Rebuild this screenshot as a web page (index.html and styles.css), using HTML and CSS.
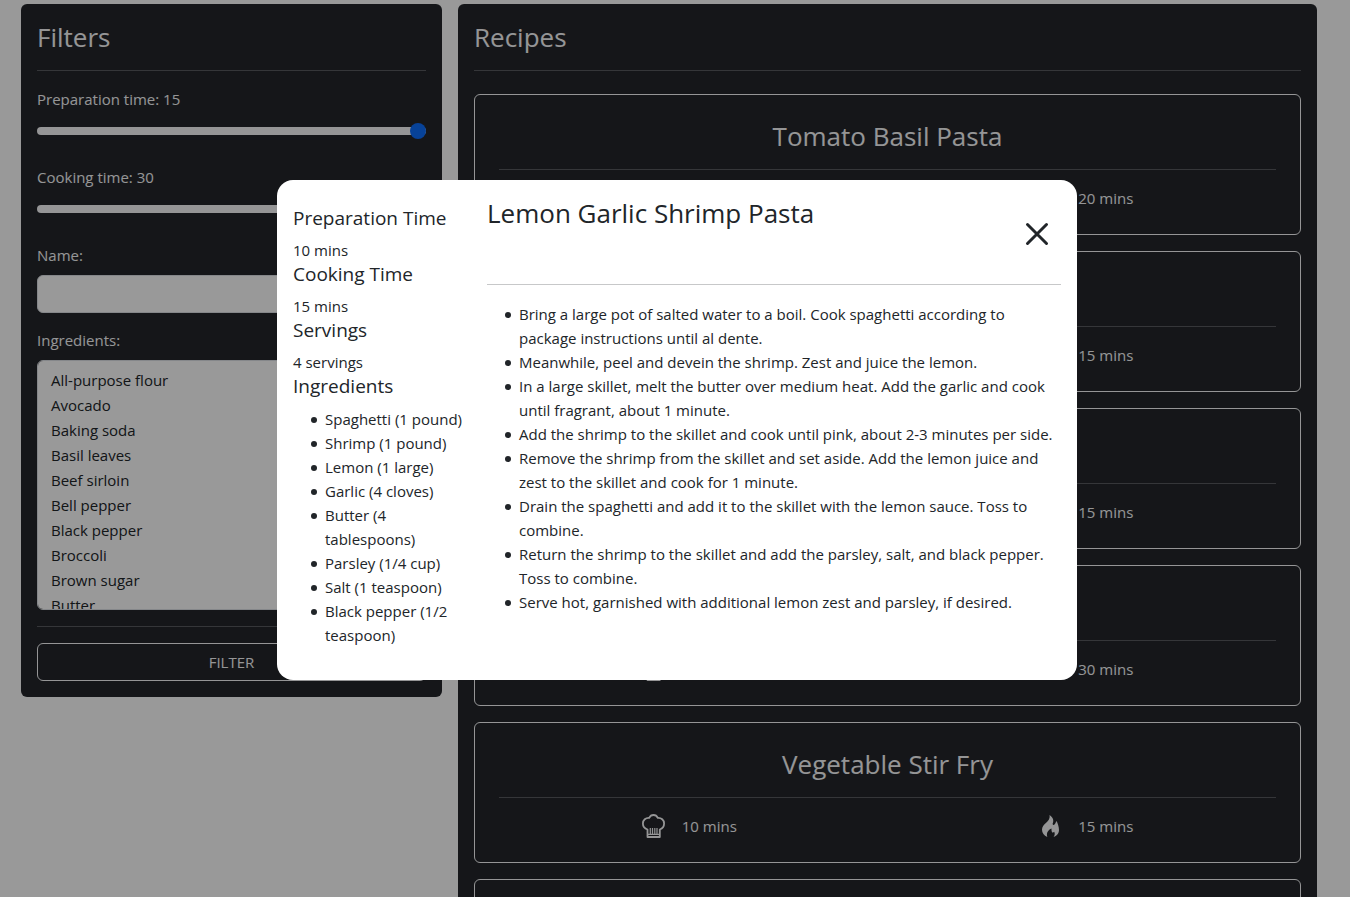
FILE: index.html
```html
<!DOCTYPE html>
<html lang="en">
<head>
<meta charset="utf-8">
<title>Recipes</title>
<link rel="stylesheet" href="styles.css">
</head>
<body>
<svg class="sprite" aria-hidden="true">
  <symbol id="chef-hat" viewBox="0 0 24 24">
    <g fill="none" stroke="currentColor" stroke-width="1.800" stroke-linejoin="round">
      <path d="M5.500 15.500C2.400 14.500 .9 12 .9 9.500C.9 6 3.800 3.600 7.200 3.900C8.200 1.800 9.800 1 11.500 1S14.800 1.800 15.800 3.900C19.200 3.600 22.100 6 22.100 9.500C22.100 12 20.600 14.500 17.800 15.500V23H5.500Z"/>
      <path d="M5.500 20.300H17.800M8.300 14V20M10.500 14V20M12.800 14V20M15 14V20" stroke-width="1.200"/>
    </g>
  </symbol>
  <symbol id="fire" viewBox="0 0 24 24">
    <path fill="currentColor" d="M11.500 1C15.200 3.300 16 6.500 14.700 9.600C14.400 10.600 15.300 11.300 16.200 10.700C17.200 10 17.600 8.500 18.600 7C19.500 9 21 12.500 21 16C21 19.500 18.500 22 15.600 23C17 21 17 19.500 16.200 17.800C15.500 18.800 14.300 18.900 13.900 18C13.500 17 13.400 15.800 13.500 14.500C10.300 16 8 18.800 9.300 23C6 21.800 4 19 4 15.800C4 12.500 5.800 10.700 7.600 9.200C9.800 7.300 12.300 5 11.500 1Z"/>
  </symbol>
</svg>

<main class="page">
  <form class="panel filters">
    <h2 class="panel-title">Filters</h2>
    <hr class="rule">
    <label class="label" for="prep">Preparation time: 15</label>
    <input class="range" id="prep" type="range" min="0" max="15" value="15">
    <label class="label" for="cook">Cooking time: 30</label>
    <input class="range" id="cook" type="range" min="0" max="30" value="30">
    <label class="label" for="name">Name:</label>
    <input class="text-input" id="name" type="text">
    <label class="label" for="ingredients">Ingredients:</label>
    <select class="list-input" id="ingredients" multiple>
      <option>All-purpose flour</option>
      <option>Avocado</option>
      <option>Baking soda</option>
      <option>Basil leaves</option>
      <option>Beef sirloin</option>
      <option>Bell pepper</option>
      <option>Black pepper</option>
      <option>Broccoli</option>
      <option>Brown sugar</option>
      <option>Butter</option>
    </select>
    <hr class="rule">
    <button class="filter-button" type="button">FILTER</button>
  </form>

  <section class="panel recipes">
    <h2 class="panel-title">Recipes</h2>
    <hr class="rule">
    <div class="cards">
      <article class="card">
        <h3 class="card-title">Tomato Basil Pasta</h3>
        <hr class="rule">
        <div class="times">
          <span class="time"><svg class="icon"><use href="#chef-hat"/></svg>10 mins</span>
          <span class="time"><svg class="icon"><use href="#fire"/></svg>20 mins</span>
        </div>
      </article>
      <article class="card">
        <h3 class="card-title">Lemon Garlic Shrimp Pasta</h3>
        <hr class="rule">
        <div class="times">
          <span class="time"><svg class="icon"><use href="#chef-hat"/></svg>10 mins</span>
          <span class="time"><svg class="icon"><use href="#fire"/></svg>15 mins</span>
        </div>
      </article>
      <article class="card">
        <h3 class="card-title">Beef Stir Fry</h3>
        <hr class="rule">
        <div class="times">
          <span class="time"><svg class="icon"><use href="#chef-hat"/></svg>10 mins</span>
          <span class="time"><svg class="icon"><use href="#fire"/></svg>15 mins</span>
        </div>
      </article>
      <article class="card">
        <h3 class="card-title">Broccoli Soup</h3>
        <hr class="rule">
        <div class="times">
          <span class="time"><svg class="icon"><use href="#chef-hat"/></svg>10 mins</span>
          <span class="time"><svg class="icon"><use href="#fire"/></svg>30 mins</span>
        </div>
      </article>
      <article class="card">
        <h3 class="card-title">Vegetable Stir Fry</h3>
        <hr class="rule">
        <div class="times">
          <span class="time"><svg class="icon"><use href="#chef-hat"/></svg>10 mins</span>
          <span class="time"><svg class="icon"><use href="#fire"/></svg>15 mins</span>
        </div>
      </article>
      <article class="card">
        <h3 class="card-title">Avocado Toast</h3>
        <hr class="rule">
        <div class="times">
          <span class="time"><svg class="icon"><use href="#chef-hat"/></svg>5 mins</span>
          <span class="time"><svg class="icon"><use href="#fire"/></svg>5 mins</span>
        </div>
      </article>
    </div>
  </section>
</main>

<div class="overlay">
  <div class="modal" role="dialog" aria-modal="true" aria-labelledby="modal-title">
    <aside class="facts">
      <h5 class="fact-title">Preparation Time</h5>
      <p class="fact">10 mins</p>
      <h5 class="fact-title">Cooking Time</h5>
      <p class="fact">15 mins</p>
      <h5 class="fact-title">Servings</h5>
      <p class="fact">4 servings</p>
      <h5 class="fact-title">Ingredients</h5>
      <ul class="list">
        <li>Spaghetti (1 pound)</li>
        <li>Shrimp (1 pound)</li>
        <li>Lemon (1 large)</li>
        <li>Garlic (4 cloves)</li>
        <li>Butter (4 tablespoons)</li>
        <li>Parsley (1/4 cup)</li>
        <li>Salt (1 teaspoon)</li>
        <li>Black pepper (1/2 teaspoon)</li>
      </ul>
    </aside>
    <section class="steps">
      <header class="modal-header">
        <h3 class="modal-title" id="modal-title">Lemon Garlic Shrimp Pasta</h3>
        <button class="close" type="button" aria-label="Close">
          <svg class="close-icon" viewBox="0 0 24 24"><path d="M2.500 2.500L21.500 21.500M21.500 2.500L2.500 21.500" fill="none" stroke="currentColor" stroke-width="3" stroke-linecap="round"/></svg>
        </button>
      </header>
      <hr class="rule">
      <ul class="list">
        <li>Bring a large pot of salted water to a boil. Cook spaghetti according to package instructions until al dente.</li>
        <li>Meanwhile, peel and devein the shrimp. Zest and juice the lemon.</li>
        <li>In a large skillet, melt the butter over medium heat. Add the garlic and cook until fragrant, about 1 minute.</li>
        <li>Add the shrimp to the skillet and cook until pink, about 2-3 minutes per side.</li>
        <li>Remove the shrimp from the skillet and set aside. Add the lemon juice and zest to the skillet and cook for 1 minute.</li>
        <li>Drain the spaghetti and add it to the skillet with the lemon sauce. Toss to combine.</li>
        <li>Return the shrimp to the skillet and add the parsley, salt, and black pepper. Toss to combine.</li>
        <li>Serve hot, garnished with additional lemon zest and parsley, if desired.</li>
      </ul>
    </section>
  </div>
</div>
</body>
</html>
```
FILE: styles.css
```css
*, *::before, *::after { box-sizing: border-box; }

body {
  margin: 0;
  height: 100vh;
  overflow: hidden;
  background: #fff;
  color: #212529;
  font: 15px/24px "Open Sans", "Noto Sans", sans-serif;
}

h2, h3, h5, p, ul { margin: 0; font-weight: 400; }
button, input, select { font: inherit; color: inherit; }

.sprite { display: none; }

.page {
  display: grid;
  grid-template-columns: minmax(0, 421fr) minmax(0, 859fr);
  align-items: start;
  gap: 16px;
  max-width: 1350px;
  margin: 0 auto;
  padding: 4px 33px 4px 21px;
}

.panel {
  padding: 16px;
  border-radius: 6px;
  background: #24262b;
  color: #f8f9fa;
}

.panel-title, .card-title, .modal-title { font-size: 26px; line-height: 34px; }

.rule {
  margin: 16px 0;
  border: 0;
  border-top: 1px solid;
  color: inherit;
  opacity: .25;
}

.filters { display: flex; flex-direction: column; }
.filters .rule { width: 100%; }

.label { margin-bottom: 8px; }

.range {
  appearance: none;
  width: 100%;
  height: 24px;
  margin: 0 0 22px;
  background: transparent;
}
.range::-webkit-slider-runnable-track {
  height: 8px;
  border-radius: 8px;
  background: #f8f9fa;
}
.range::-webkit-slider-thumb {
  appearance: none;
  width: 16px;
  height: 16px;
  margin-top: -4px;
  border-radius: 50%;
  background: #0d6efd;
}

.text-input, .list-input {
  width: 100%;
  border: 1px solid #dee2e6;
  border-radius: 6px;
  background: #fff;
  color: #212529;
  padding: 7px 12px;
}
.text-input { height: 38px; margin-bottom: 15px; }
.list-input { height: 250px; scrollbar-width: none; }
.list-input option { min-height: 25px; padding: 2px 1px; }

.filter-button {
  padding: 6px 12px;
  border: 1px solid #f8f9fa;
  border-radius: 6px;
  background: transparent;
}

.cards { display: grid; gap: 16px; margin-top: 23px; }

.card {
  padding: 24px;
  border: 1px solid #f8f9fa;
  border-radius: 6px;
  text-align: center;
}

.times { display: grid; grid-template-columns: 1fr 1fr; gap: 16px; }
.time { display: flex; justify-content: center; align-items: center; gap: 16px; }
.icon { width: 24px; height: 24px; }

.overlay {
  position: fixed;
  inset: 0;
  display: flex;
  justify-content: center;
  align-items: center;
  padding: 0 0 37px 4px;
  background: rgba(0, 0, 0, .4);
}

.modal {
  display: grid;
  grid-template-columns: 178px minmax(0, 1fr);
  gap: 16px;
  width: 100%;
  max-width: 800px;
  min-height: 500px;
  padding: 16px;
  border-radius: 16px;
  background: #fff;
}

.facts { padding-top: 10px; }
.fact-title { margin-bottom: 8px; font-size: 19px; line-height: 24px; }

.modal-header { display: flex; justify-content: space-between; min-height: 76px; }
.steps .rule { margin-top: 12px; }

.close {
  align-self: center;
  display: grid;
  place-items: center;
  width: 48px;
  height: 48px;
  padding: 0;
  border: 0;
  background: transparent;
}
.close-icon { width: 24px; height: 24px; }

.list { padding: 1px 0 0 32px; list-style: none; }
.list li { position: relative; }
.list li::before {
  content: "";
  position: absolute;
  top: 10px;
  left: -14px;
  width: 6px;
  height: 6px;
  border-radius: 50%;
  background: currentColor;
}
```
